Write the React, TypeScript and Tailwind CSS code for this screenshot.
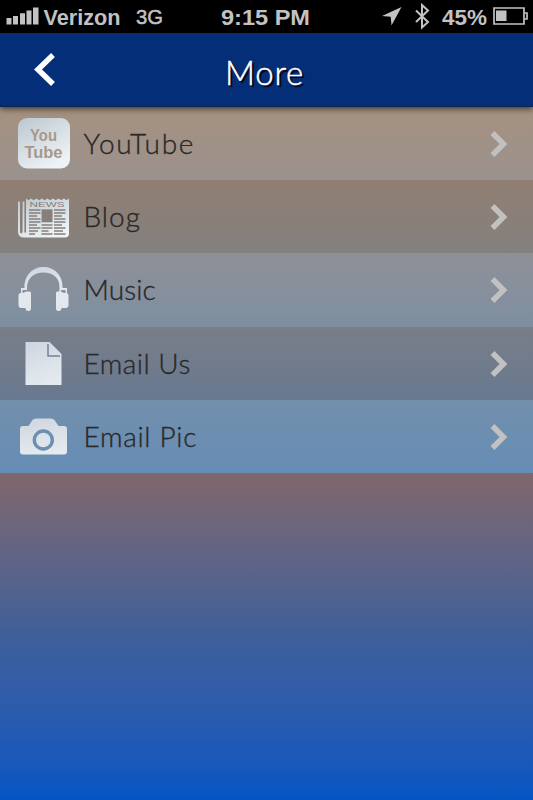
import type { ReactNode } from "react";

interface MenuItem {
  label: string;
  spacing: string;
  row: string;
  icon: ReactNode;
}

function IconDefs() {
  return (
    <svg width="0" height="0" className="absolute">
      <defs>
        <linearGradient id="silver" x1="0" y1="0" x2="0.6" y2="1">
          <stop offset="0" stopColor="#bcc7d0" />
          <stop offset="1" stopColor="#edf3f6" />
        </linearGradient>
        <linearGradient id="pale" x1="0.2" y1="0" x2="0.5" y2="1">
          <stop offset="0" stopColor="#d0d6e0" />
          <stop offset="1" stopColor="#e4ebef" />
        </linearGradient>
      </defs>
    </svg>
  );
}

function YouTubeIcon() {
  return (
    <svg width="54" height="54" viewBox="0 0 54 54">
      <rect x="1" y="1" width="52" height="50.5" rx="9" fill="url(#silver)" />
      <g
        fill="#a89889"
        fontFamily="Liberation Sans"
        fontWeight="700"
        fontSize="16"
      >
        <text x="13" y="24" textLength="27" lengthAdjust="spacingAndGlyphs">
          You
        </text>
        <text x="7.5" y="41" textLength="38" lengthAdjust="spacingAndGlyphs">
          Tube
        </text>
      </g>
    </svg>
  );
}

function NewsIcon() {
  return (
    <svg width="54" height="54" viewBox="0 0 54 54">
      <path
        d="M9 8.5l2.5 1.800L14 8.500l2.700 1.800L19.500 8.500l2.700 1.800L25 8.500l2.700 1.800L30.500 8.500l2.700 1.800L36 8.500l2.700 1.800L41.500 8.500l2.700 1.800L47 8.500l2.500 1.800L52 8.500V43.500q0 4-4 4H7q-6 0-6-6V11.500h2V41q0 2.500 1.300 2.500T5.600 41V11.500H7.400V42.500H9z"
        fill="url(#silver)"
      />
      <text
        x="12.5"
        y="17"
        fill="#877c74"
        fontFamily="Liberation Sans"
        fontSize="7.5"
        textLength="35"
        lengthAdjust="spacingAndGlyphs"
      >
        NEWS
      </text>
      <path
        d="M12 20h11.500M12 23h11.500M12 26h8M12 29h11.500M12 32h11.500M12 35h8M12 38h11.500M12 41h9M12 44h6M37 20h11.500M37 23h11.500M37 26h8M37 29h11.500M37 32h11.500M37 35h8M37 38h11.500M37 41h9M37 44h11.500M24.500 35H35.500M24.500 38H35.500M24.500 41h7M24.500 44H35.500"
        stroke="#877f79"
        strokeWidth="1.500"
      />
      <path d="M24.500 19.300h11v13h-11z" fill="#877f79" />
    </svg>
  );
}

function HeadphonesIcon() {
  return (
    <svg width="54" height="54" viewBox="0 0 54 54">
      <path
        d="M4 30v-5h3.500C7 12 16 4 26.500 4S46 12 45.500 25H50v5h-1.500v-3H44v3h-1.500v-5C43 15 36 9.500 26.500 9.500S10 15 10 25v2H5.500v3z"
        fill="url(#pale)"
      />
      <path
        d="M4 30q3 0 5-1.500h3.500q1.500 0 1.500 1.500v16q0 2-2.500 2-3 0-3-3H4.500q-3 0-3-3v-9.500Q1.500 30 4 30zM49 30q-3 0-5-1.500h-3.500q-1.500 0-1.500 1.500v16q0 2 2.500 2 3 0 3-3h4q3 0 3-3v-9.500Q51.500 30 49 30z"
        fill="#e2e8ed"
      />
    </svg>
  );
}

function PageIcon() {
  return (
    <svg width="54" height="54" viewBox="0 0 54 54">
      <path d="M8.500 5h24L44.500 17v31h-36z" fill="url(#pale)" />
      <path d="M31 7v12h12" fill="none" stroke="#758391" strokeWidth="1.500" />
    </svg>
  );
}

function CameraIcon() {
  return (
    <svg width="54" height="54" viewBox="0 0 54 54">
      <path
        d="M6 16h5.500l4-6q1.500-1.500 3.500-1.500h15q2 0 3.500 1.500l4 6H47q3 0 3 3v22.500q0 3-3 3H6q-3 0-3-3V19q0-3 3-3z"
        fill="url(#pale)"
      />
      <circle
        cx="26.300"
        cy="30"
        r="9"
        fill="none"
        stroke="#6c8fb4"
        strokeWidth="3.400"
      />
    </svg>
  );
}

const items: MenuItem[] = [
  {
    label: "YouTube",
    spacing: "tracking-[1.7px]",
    row: "h-[73px] from-[#a69180] to-[#9a928d]",
    icon: <YouTubeIcon />,
  },
  {
    label: "Blog",
    spacing: "tracking-[1px]",
    row: "h-[73px] from-[#917f72] to-[#83807e]",
    icon: <NewsIcon />,
  },
  {
    label: "Music",
    spacing: "tracking-[0.1px]",
    row: "h-[74px] from-[#8f9097] to-[#7e8fa1]",
    icon: <HeadphonesIcon />,
  },
  {
    label: "Email Us",
    spacing: "tracking-[0.5px]",
    row: "h-[73px] from-[#797e87] to-[#687990]",
    icon: <PageIcon />,
  },
  {
    label: "Email Pic",
    spacing: "tracking-[0.7px]",
    row: "h-[73px] from-[#738fab] to-[#658db6]",
    icon: <CameraIcon />,
  },
];

function StatusBar() {
  return (
    <div className="flex h-[33px] items-center bg-black font-['Liberation_Sans'] text-[22px] font-bold leading-none text-[#c2c2c2]">
      <svg width="43" height="33" fill="currentColor">
        <path d="M6.500 18h5v6.500h-5zM13 16h5v8.500h-5zM20 13.300h5v11.200h-5zM26.500 10.500h5v14h-5zM33 7.500h5.500v17H33z" />
      </svg>
      <svg width="490" height="33" fill="currentColor">
        <text x="0.500" y="24.500" textLength="77" lengthAdjust="spacingAndGlyphs">
          Verizon
        </text>
        <text
          x="93"
          y="24"
          fontSize="21"
          fontWeight="400"
          textLength="27"
          lengthAdjust="spacingAndGlyphs"
          stroke="currentColor"
          strokeWidth="0.500"
        >
          3G
        </text>
        <text x="178" y="24.500" textLength="89" lengthAdjust="spacingAndGlyphs">
          9:15 PM
        </text>
        <path d="M358.500 7L348.500 25.500l-.8-8.700-8.700-.8z" />
        <path
          d="M373 10.500l12 11.500-6 5.500V5l6 5.500L373 22"
          fill="none"
          stroke="currentColor"
          strokeWidth="2"
        />
        <text x="399" y="24.500" textLength="45" lengthAdjust="spacingAndGlyphs">
          45%
        </text>
        <path
          d="M451 8h30v16h-30zM481.500 13h2.500v6h-2.500"
          fill="none"
          stroke="currentColor"
          strokeWidth="1.700"
        />
        <path d="M453 10.500h10.500v10.500H453z" />
      </svg>
    </div>
  );
}

function Header() {
  return (
    <header className="relative z-10 flex h-[74px] items-center justify-center border-b border-[#062354] bg-[#042e77] shadow-[0_2px_6px_rgba(0,0,0,0.6)]">
      <button className="absolute left-[34px] top-[19px]">
        <svg width="24" height="36" fill="none" stroke="white" strokeWidth="5.500">
          <path d="M19 3L4 17.500l15 14.500" />
        </svg>
      </button>
      <h1 className="mr-[4px] pt-[5px] font-['Lato',sans-serif] text-[33px] font-light leading-none tracking-[0.8px] text-white [-webkit-text-stroke:0.5px_white] [text-shadow:2px_2px_1px_#000]">
        More
      </h1>
    </header>
  );
}

export default function App() {
  return (
    <div className="h-[800px] w-[533px] overflow-hidden bg-black">
      <IconDefs />
      <StatusBar />
      <Header />
      <ul>
        {items.map((item) => (
          <li
            key={item.label}
            className={`flex items-center bg-linear-to-b pl-[17px] pr-[24px] ${item.row}`}
          >
            {item.icon}
            <span
              className={`ml-[12.5px] flex-1 pb-[2px] font-['Lato',sans-serif] text-[28px] font-light leading-none text-[#292929] [-webkit-text-stroke:0.35px_#292929] ${item.spacing}`}
            >
              {item.label}
            </span>
            <svg
              width="20"
              height="28"
              fill="none"
              stroke="#c1c1c1"
              strokeWidth="5.500"
            >
              <path d="M3.500 3l11 11-11 11" />
            </svg>
          </li>
        ))}
      </ul>
      <div className="h-[327px] bg-linear-to-b from-[#80666c] via-[#3e5f9a] to-[#0355c4]" />
    </div>
  );
}
